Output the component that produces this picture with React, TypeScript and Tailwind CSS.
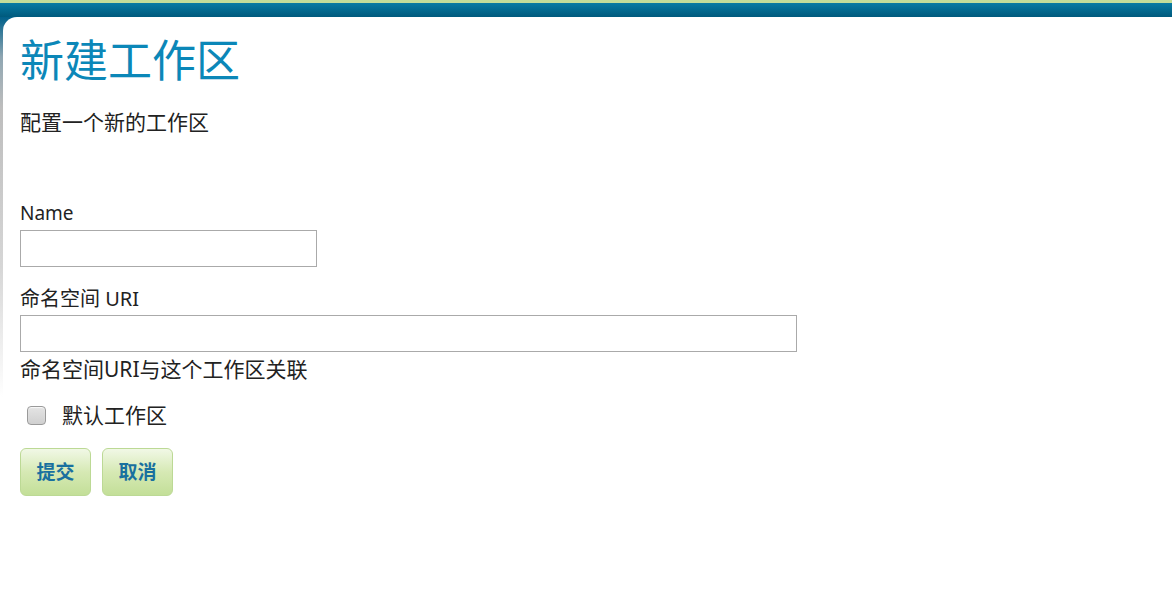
import { useState } from "react";

const font = { fontFamily: '"Noto Sans", "Noto Sans CJK SC", sans-serif' };

function GreenButton({ children }: { children: string }) {
  return (
    <button
      type="button"
      className="h-[48px] w-[71px] rounded-[6px] border border-[#bcd995] bg-gradient-to-b from-[#f1f8e6] via-[#d6e9b4] to-[#c3df98] text-[19px] font-bold text-[#19709f]"
    >
      {children}
    </button>
  );
}

export default function App() {
  const [isDefault, setIsDefault] = useState(false);

  return (
    <div className="h-[600px] w-[1172px] overflow-hidden bg-white text-[#222]" style={font}>
      <div className="h-[3px] bg-[#c4dd9a]" />
      <div className="h-[14px] bg-gradient-to-b from-[#0a7ba4] to-[#005a7d]" />
      <div className="bg-[linear-gradient(to_bottom,#00608a_0px,#8fa6b2_40px,#bdbdbd_90px,#d6d6d6_250px,#ffffff_380px)]">
        <div className="ml-[3px] h-[583px] rounded-tl-[14px] bg-white pl-[17px] pt-[21px]">
          <h1 className="text-[44px] font-normal leading-[44px] text-[#0b87b8]">新建工作区</h1>
          <p className="mt-[30px] text-[21px] leading-[21px]">配置一个新的工作区</p>

          <form className="mt-[70px] flex flex-col">
            <label className="text-[19px] leading-[20px]">Name</label>
            <input className="mt-[7px] h-[37px] w-[297px] border border-[#aaaaaa] bg-white px-1 outline-none" />

            <label className="mt-[22px] text-[20px] leading-[20px]">命名空间 URI</label>
            <input className="mt-[6px] h-[37px] w-[777px] border border-[#aaaaaa] bg-white px-1 outline-none" />
            <p className="mt-[7px] text-[21px] leading-[21px]">命名空间URI与这个工作区关联</p>

            <label className="mt-[25px] flex items-center text-[21px] leading-[21px]">
              <span
                onClick={() => setIsDefault(!isDefault)}
                className="ml-[7px] mr-[16px] flex h-[19px] w-[19px] items-center justify-center rounded-[4px] border border-[#9a9a9a] bg-gradient-to-b from-[#e4e4e4] to-[#d0d0d0] shadow-[inset_0_1px_1px_rgba(255,255,255,0.8)]"
              >
                {isDefault && <span className="text-[13px] leading-none text-[#333]">✓</span>}
              </span>
              默认工作区
            </label>

            <div className="mt-[22px] flex gap-[11px]">
              <GreenButton>提交</GreenButton>
              <GreenButton>取消</GreenButton>
            </div>
          </form>
        </div>
      </div>
    </div>
  );
}
